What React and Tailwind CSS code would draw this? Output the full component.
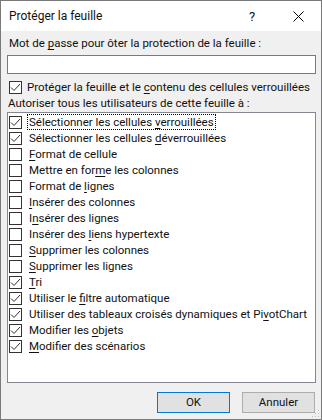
import React from "react";

const items = [
  { c: true, t: ["Sélectionner les cellules ", "v", "errouillées"], focus: true },
  { c: true, t: ["Sélectionner les cellules ", "d", "éverrouillées"] },
  { c: false, t: ["", "F", "ormat de cellule"] },
  { c: false, t: ["Mettre en for", "m", "e les colonnes"] },
  { c: false, t: ["Format de ", "l", "ignes"] },
  { c: false, t: ["", "I", "nsérer des colonnes"] },
  { c: false, t: ["I", "n", "sérer des lignes"] },
  { c: false, t: ["Insérer des ", "l", "iens hypertexte"] },
  { c: false, t: ["", "S", "upprimer les colonnes"] },
  { c: false, t: ["", "S", "upprimer les lignes"] },
  { c: true, t: ["", "T", "ri"] },
  { c: true, t: ["Utiliser le ", "f", "iltre automatique"] },
  { c: true, t: ["Utiliser des tableaux croisés dynamiques et Pi", "v", "otChart"] },
  { c: true, t: ["Modifier les ", "o", "bjets"] },
  { c: true, t: ["", "M", "odifier des scénarios"] },
];

function Box({ checked }) {
  return (
    <div className="w-[13px] h-[13px] border border-[#333333] bg-white shrink-0 flex items-center justify-center">
      {checked && (
        <svg width="11" height="11" viewBox="0 0 11 11">
          <polyline points="1,5.5 4,8.5 10,2" fill="none" stroke="#333333" strokeWidth="1" />
        </svg>
      )}
    </div>
  );
}

function Label({ t }) {
  return (
    <span className="whitespace-nowrap">
      {t[0]}
      <span className="underline underline-offset-2">{t[1]}</span>
      {t[2]}
    </span>
  );
}

export default function App() {
  return (
    <div
      className="w-[322px] h-[420px] border border-[#7a7a7a] bg-[#f0f0f0] flex flex-col text-[11.5px] leading-[15px] text-[#111111] whitespace-nowrap"
      style={{ fontFamily: 'Roboto, "Noto Sans", sans-serif' }}
    >
      <div className="h-[30px] bg-white flex items-center shrink-0 text-[12px]">
        <div className="pl-[8px] flex-1">Protéger la feuille</div>
        <div className="w-[46px] h-full flex items-center justify-center text-[13px]">?</div>
        <div className="w-[46px] h-full flex items-center justify-center">
          <svg width="11" height="11" viewBox="0 0 11 11">
            <path d="M0.5 0.5 L10.5 10.5 M10.5 0.5 L0.5 10.5" stroke="#000" strokeWidth="1" />
          </svg>
        </div>
      </div>
      <div className="flex-1 flex flex-col pl-[6px] pr-[5px] pt-[5px]">
        <div className="pl-[2px] h-[15px]">
          Mot de <span className="underline underline-offset-2">p</span>asse pour ôter la protection de la feuille :
        </div>
        <div className="mt-[4px] h-[19px] w-[309px] border border-[#7a7a7a] bg-white"></div>
        <div className="mt-[5px] h-[16px] flex items-center pl-[2px] gap-[5px]">
          <Box checked />
          <span>
            Protéger la feuille et le <span className="underline underline-offset-2">c</span>ontenu des cellules verrouillées
          </span>
        </div>
        <div className="mt-[1px] h-[15px] pl-[1px]">Autoriser tous les utilisateurs de cette feuille à :</div>
        <div className="mt-[1px] h-[271px] w-[309px] border border-[#828790] bg-white pt-[1px] flex flex-col">
          {items.map((it, i) => (
            <div key={i} className="h-[16px] flex items-center pl-[1px] gap-[6px]">
              <Box checked={it.c} />
              <div
                className={
                  it.focus
                    ? "border border-dotted border-black px-[1px] -ml-[1px] h-[16px] flex items-center"
                    : "border border-transparent px-[1px] -ml-[1px] h-[16px] flex items-center"
                }
              >
                <Label t={it.t} />
              </div>
            </div>
          ))}
        </div>
        <div className="mt-[9px] flex justify-end gap-[12px] pr-[1px] relative">
          <div className="w-[73px] h-[21px] border border-[#0078d7] bg-[#e1e1e1] flex items-center justify-center">OK</div>
          <div className="w-[73px] h-[21px] border border-[#adadad] bg-[#e1e1e1] flex items-center justify-center">Annuler</div>
          <svg className="absolute right-[-4px] top-[18px]" width="8" height="8" viewBox="0 0 8 8">
            <rect x="6" y="0" width="1" height="1" fill="#bcbcbc" />
            <rect x="3" y="3" width="1" height="1" fill="#bcbcbc" />
            <rect x="6" y="3" width="1" height="1" fill="#bcbcbc" />
            <rect x="0" y="6" width="1" height="1" fill="#bcbcbc" />
            <rect x="3" y="6" width="1" height="1" fill="#bcbcbc" />
            <rect x="6" y="6" width="1" height="1" fill="#bcbcbc" />
          </svg>
        </div>
      </div>
    </div>
  );
}
